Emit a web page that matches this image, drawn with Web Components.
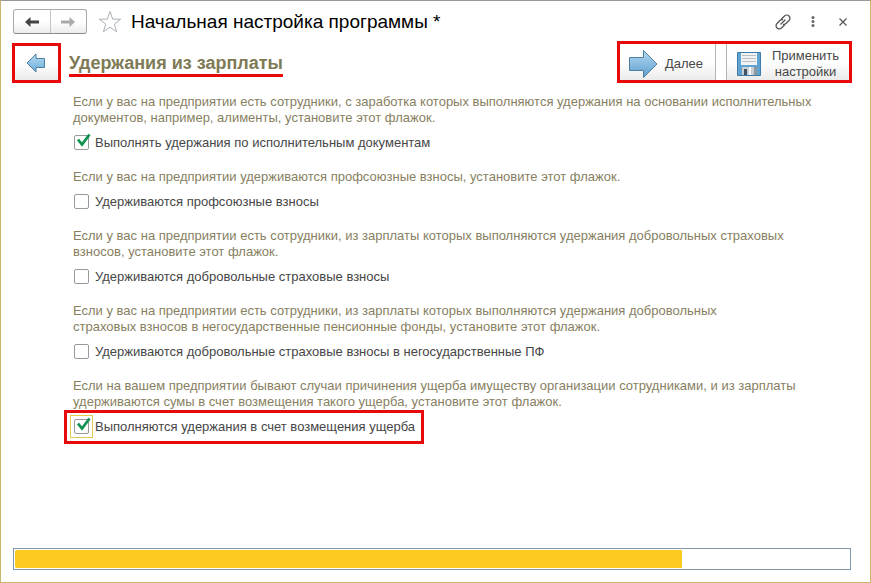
<!DOCTYPE html>
<html lang="ru">
<head>
<meta charset="utf-8">
<title>Начальная настройка программы</title>
<style>
  body {
    margin: 0;
    background: #fff;
    font-family: "Liberation Sans", Arial, sans-serif;
    font-size: 13px;
    line-height: 16px;
    color: #464646;
  }
</style>
</head>
<body>

<setup-window>
  <title-bar slot="top">Начальная настройка программы *</title-bar>
  <step-bar slot="top">Удержания из зарплаты</step-bar>

  <setup-option checked label="Выполнять удержания по исполнительным документам">
    Если у вас на предприятии есть сотрудники, с заработка которых выполняются удержания на основании исполнительных<br>
    документов, например, алименты, установите этот флажок.
  </setup-option>
  <setup-option label="Удерживаются профсоюзные взносы">
    Если у вас на предприятии удерживаются профсоюзные взносы, установите этот флажок.
  </setup-option>
  <setup-option label="Удерживаются добровольные страховые взносы">
    Если у вас на предприятии есть сотрудники, из зарплаты которых выполняются удержания добровольных страховых<br>
    взносов, установите этот флажок.
  </setup-option>
  <setup-option label="Удерживаются добровольные страховые взносы в негосударственные ПФ">
    Если у вас на предприятии есть сотрудники, из зарплаты которых выполняются удержания добровольных<br>
    страховых взносов в негосударственные пенсионные фонды, установите этот флажок.
  </setup-option>
  <setup-option checked marked label="Выполняются удержания в счет возмещения ущерба">
    Если на вашем предприятии бывают случаи причинения ущерба имуществу организации сотрудниками, и из зарплаты<br>
    удерживаются сумы в счет возмещения такого ущерба, установите этот флажок.
  </setup-option>

  <setup-progress slot="bottom" value="667" max="834"></setup-progress>
</setup-window>

<script>
const define = (name, html, init) => {
  const template = document.createElement('template')
  template.innerHTML = html
  customElements.define(name, class extends HTMLElement {
    constructor() {
      super()
      this.root = this.attachShadow({ mode: 'open' })
      this.root.append(template.content.cloneNode(true))
      if (init) init(this, this.root)
    }
  })
}

define('setup-window', `
<style>
:host {
  display: flex;
  flex-direction: column;
  box-sizing: border-box;
  min-height: 100vh;
  border: 1px solid #c6b66e;
  border-top-color: #999;
  padding: 8px 19px 12px 12px;
}
main {
  flex: 1;
  display: flex;
  flex-direction: column;
  gap: 18px;
  padding: 11px 0 20px 60px;
}
</style>
<slot name="top"></slot>
<main><slot></slot></main>
<slot name="bottom"></slot>
`)

define('title-bar', `
<style>
:host {
  display: flex;
  align-items: center;
  height: 25px;
  margin-right: -1px;
}
.history {
  display: flex;
  box-sizing: border-box;
  width: 74px;
  height: 25px;
  border: 1px solid #aaa;
  border-bottom-color: #8c8c8c;
  border-radius: 3px;
  background: linear-gradient(#fff 50%, #ececec);
}
button {
  display: flex;
  align-items: center;
  justify-content: center;
  padding: 0;
  border: none;
  background: none;
  cursor: pointer;
}
.history button {
  flex: 1;
}
.history button + button {
  border-left: 1px solid #c4c4c4;
}
.star {
  margin: 0 9px 0 11px;
}
h1 {
  flex: 1;
  margin: 0;
  font-size: 19px;
  line-height: 24px;
  font-weight: 400;
  color: #000;
}
.tools {
  display: flex;
  gap: 12px;
}
.tools button {
  width: 18px;
  height: 24px;
}
</style>
<div class="history">
  <button type="button" aria-label="Назад">
    <svg width="16" height="12" viewBox="0 0 16 12"><path d="M1 6 6.500 1v3.600H15v2.800H6.500V11z" fill="#444"/></svg>
  </button>
  <button type="button" aria-label="Вперед">
    <svg width="16" height="12" viewBox="0 0 16 12"><path d="M15 6 9.500 1v3.600H1v2.800h8.500V11z" fill="#aaa"/></svg>
  </button>
</div>
<button class="star" type="button" aria-label="В избранное">
  <svg width="24" height="24" viewBox="0 0 24 24"><path d="M12 1.500l2.700 7.600 8 .1-6.400 4.900 2.300 7.700L12 17.200l-6.600 4.600 2.300-7.700L1.300 9.200l8-.1z" fill="#fff" stroke="#aab0b6"/></svg>
</button>
<h1><slot></slot></h1>
<div class="tools">
  <button type="button" aria-label="Ссылка">
    <svg width="18" height="18" viewBox="0 0 18 18" fill="none" stroke="#555" stroke-width="1.300" stroke-linecap="round">
      <path d="M7.500 6l3-3a3 3 0 0 1 4.500 4.500l-3 3a3 3 0 0 1-2.500.8M10.500 12l-3 3A3 3 0 0 1 3 10.500l3-3a3 3 0 0 1 2.500-.8M7 11l4-4"/>
    </svg>
  </button>
  <button type="button" aria-label="Еще">
    <svg width="4" height="11" viewBox="0 0 4 11" fill="#666"><circle cx="2" cy="1.500" r="1.500"/><circle cx="2" cy="5.500" r="1.500"/><circle cx="2" cy="9.500" r="1.500"/></svg>
  </button>
  <button type="button" aria-label="Закрыть">
    <svg width="8" height="8" viewBox="0 0 8 8" stroke="#555" stroke-width="1.200"><path d="M.5.5l7 7M7.500.5l-7 7"/></svg>
  </button>
</div>
`)

define('step-bar', `
<style>
:host {
  display: flex;
  align-items: flex-end;
  gap: 8px;
  margin: 7px -1px 0 -1px;
}
.frame {
  display: flex;
  box-sizing: border-box;
  height: 42px;
  border: 3px solid #e60a0a;
}
.back {
  height: 40px;
}
.next {
  gap: 10px;
}
button {
  display: flex;
  align-items: center;
  justify-content: center;
  padding: 0;
  border: none;
  background: linear-gradient(#fff 50%, #ebebeb);
  font: inherit;
  color: #464646;
  cursor: pointer;
}
.back button {
  width: 43px;
  padding-right: 2px;
}
.next button {
  padding-top: 3px;
}
.forward {
  width: 96px;
  gap: 7px;
  padding-right: 4px;
  border-right: 1px solid #b4b4b4;
}
.apply {
  width: 123px;
  gap: 11px;
  border-left: 1px solid #b4b4b4;
}
h2 {
  margin: 0 auto 6px 0;
  border-bottom: 3px solid #e60a0a;
  font-size: 18px;
  line-height: 22px;
  color: #7d7a55;
}
</style>
<div class="frame back">
  <button type="button" aria-label="Предыдущий шаг">
    <svg width="20" height="20" viewBox="0 0 20 20">
      <defs><linearGradient id="b" x2="0" y2="1"><stop stop-color="#b5dbf2"/><stop offset="1" stop-color="#6caedb"/></linearGradient></defs>
      <path d="M1 10l9-9v4.500h8.500v9H10V19z" fill="url(#b)" stroke="#4d7f9f"/>
    </svg>
  </button>
</div>
<h2><slot></slot></h2>
<div class="frame next">
  <button class="forward" type="button">
    <svg width="30" height="30" viewBox="0 0 30 30">
      <defs><linearGradient id="f" x2="0" y2="1"><stop stop-color="#b5d9f0"/><stop offset="1" stop-color="#5b9fd0"/></linearGradient></defs>
      <path d="M1.500 8.500h14V1.500L29 15 15.500 28.500v-7h-14z" fill="url(#f)" stroke="#4d7f9f"/>
    </svg>
    Далее
  </button>
  <button class="apply" type="button">
    <svg width="24" height="24" viewBox="0 0 24 24">
      <path d="M.5.5h23v23H.5z" fill="#5fa3d0" stroke="#3f7ba6"/>
      <path d="M4 1h16v12H4z" fill="#f1f3f4"/>
      <path d="M5 3.500h14M5 6.500h14M5 9.500h14" stroke="#b9c0c4"/>
      <path d="M5 15h15v8H5z" fill="#c9ced2"/>
      <path d="M7 17h3v6H7z" fill="#3f5468"/>
      <path d="M12 15h2v8h-2z" fill="#fafafa"/>
      <path d="M17 15h3v8h-3z" fill="#8d979f"/>
    </svg>
    <span>Применить<br>настройки</span>
  </button>
</div>
`)

define('setup-option', `
<style>
:host {
  display: flex;
  flex-direction: column;
  align-items: flex-start;
  gap: 9px;
}
p {
  margin: 0;
  color: #87805f;
}
.row {
  position: relative;
  display: flex;
  align-items: flex-start;
  gap: 6px;
  height: 16px;
}
.box {
  position: relative;
  display: flex;
  margin-left: 1px;
}
input {
  appearance: none;
  box-sizing: border-box;
  width: 15px;
  height: 15px;
  margin: 0;
  border: 1px solid #999;
  border-radius: 2px;
  background: #fff;
}
.tick {
  display: none;
  position: absolute;
  left: 2px;
  top: -2px;
  pointer-events: none;
}
input:checked + .tick {
  display: block;
}
:host([marked]) .box {
  outline: 1px solid #e3cb52;
  outline-offset: 3px;
}
/* callout drawn round the row */
:host([marked]) .row::after {
  content: "";
  position: absolute;
  inset: -9px;
  border: 3px solid #e60a0a;
  pointer-events: none;
}
</style>
<p><slot></slot></p>
<div class="row">
  <span class="box">
    <input type="checkbox" id="flag">
    <svg class="tick" width="15" height="14" viewBox="0 0 15 14"><path d="M2 6.500l4 5L13.500 1.500" fill="none" stroke="#0f9150" stroke-width="2.800"/></svg>
  </span>
  <label for="flag"></label>
</div>
`, (host, root) => {
  root.querySelector('label').textContent = host.getAttribute('label')
  root.querySelector('input').checked = host.hasAttribute('checked')
})

define('setup-progress', `
<style>
:host {
  display: block;
}
progress {
  appearance: none;
  display: block;
  box-sizing: border-box;
  width: 100%;
  height: 22px;
  padding: 1px;
  border: 1px solid #8296a9;
  background: #fff;
}
progress::-webkit-progress-bar {
  background: #fff;
}
progress::-webkit-progress-value {
  background: #fbcb20;
  border-radius: 2px 0 0 2px;
}
</style>
<progress aria-label="Ход настройки"></progress>
`, (host, root) => {
  const bar = root.querySelector('progress')
  bar.max = host.getAttribute('max')
  bar.value = host.getAttribute('value')
})
</script>
</body>
</html>
